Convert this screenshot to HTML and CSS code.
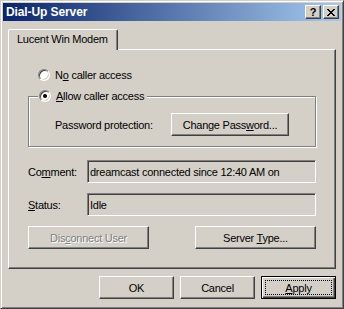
FILE: index.html
```html
<!DOCTYPE html>
<html lang="en">
<head>
    <meta charset="UTF-8">
    <meta name="viewport" content="width=device-width, initial-scale=1.0">
    <title>Dial-Up Server</title>
    <link rel="stylesheet" href="styles.css">
</head>
<body>
    <div class="window">
        <!-- Caption bar -->
        <div class="titlebar">
            <span class="title">Dial-Up Server</span>
            <div class="caption-buttons">
                <button class="cap-btn help">?</button>
                <button class="cap-btn">
                    <svg width="8" height="7" viewBox="0 0 8 7">
                        <path d="M0 0h2v1h-2zM6 0h2v1h-2zM1 1h2v1h-2zM5 1h2v1h-2zM2 2h4v1h-4zM3 3h2v1h-2zM2 4h4v1h-4zM1 5h2v1h-2zM5 5h2v1h-2zM0 6h2v1h-2zM6 6h2v1h-2z" fill="#000"/>
                    </svg>
                </button>
            </div>
        </div>

        <div class="content">
            <!-- Tab strip -->
            <div class="tabs">
                <div class="tab">Lucent Win Modem</div>
            </div>

            <div class="panel">
                <label class="radio first">
                    <span class="radio-box"></span>
                    <span>N<u>o</u> caller access</span>
                </label>

                <fieldset class="group">
                    <legend>
                        <label class="radio">
                            <span class="radio-box checked"></span>
                            <span><u>A</u>llow caller access</span>
                        </label>
                    </legend>
                    <div class="password-row">
                        <span class="password-label">Password protection:</span>
                        <button class="btn change-btn">Change Pass<u>w</u>ord...</button>
                    </div>
                </fieldset>

                <div class="field comment">
                    <span class="field-label">Co<u>m</u>ment:</span>
                    <div class="edit">dreamcast connected since 12:40 AM on</div>
                </div>
                <div class="field">
                    <span class="field-label"><u>S</u>tatus:</span>
                    <div class="edit">Idle</div>
                </div>

                <div class="actions">
                    <button class="btn wide disabled">Dis<u>c</u>onnect User</button>
                    <button class="btn wide">Server <u>T</u>ype...</button>
                </div>
            </div>

            <!-- Dialog buttons -->
            <div class="footer">
                <button class="btn">OK</button>
                <button class="btn">Cancel</button>
                <button class="btn default"><span class="focus"><u>A</u>pply</span></button>
            </div>
        </div>
    </div>
</body>
</html>
```

FILE: styles.css
```css
body {
    margin: 0;
    padding: 0;
    background: #d4d0c8;
    font-family: "Liberation Sans", Arial, sans-serif;
    font-size: 11px;
    letter-spacing: -0.25px;
    color: #000;
}

u {
    text-decoration: underline;
    text-underline-offset: 1px;
}

/* Window frame */
.window {
    box-sizing: border-box;
    width: 344px;
    height: 309px;
    padding: 2px;
    background: #d4d0c8;
    border: 1px solid;
    border-color: #d4d0c8 #404040 #404040 #d4d0c8;
    box-shadow: inset 1px 1px #fff, inset -1px -1px #808080;
}

.titlebar {
    height: 18px;
    display: flex;
    align-items: center;
    justify-content: space-between;
    padding-left: 3px;
    background: linear-gradient(to right, #0a246a, #a6caf0);
}

.title {
    color: #fff;
    font-weight: bold;
    font-size: 12px;
    letter-spacing: -0.1px;
}

.caption-buttons {
    display: flex;
    gap: 2px;
    margin-right: 2px;
}

.cap-btn {
    box-sizing: border-box;
    width: 16px;
    height: 14px;
    padding: 0;
    display: flex;
    align-items: center;
    justify-content: center;
    background: #d4d0c8;
    border: 1px solid;
    border-color: #fff #404040 #404040 #fff;
    box-shadow: inset -1px -1px #808080;
    font-family: "Liberation Sans", Arial, sans-serif;
    font-weight: bold;
    font-size: 11px;
    line-height: 1;
}

.cap-btn svg {
    display: block;
    margin-top: 1px;
}

.content {
    padding: 0 5px;
}

/* Tabs */
.tabs {
    display: flex;
    margin-top: 8px;
    height: 20px;
    position: relative;
    z-index: 1;
}

.tab {
    box-sizing: border-box;
    height: 21px;
    padding: 3px 8px 0 8px;
    width: 110px;
    background: #d4d0c8;
    border: 1px solid;
    border-bottom: none;
    border-color: #fff #404040 #d4d0c8 #fff;
    border-radius: 2px 2px 0 0;
    box-shadow: inset -1px 0 #808080;
    white-space: nowrap;
}

.panel {
    box-sizing: border-box;
    height: 220px;
    padding: 0 19px;
    border: 1px solid;
    border-color: #fff #404040 #404040 #fff;
    box-shadow: inset -1px -1px #808080;
    display: flex;
    flex-direction: column;
}

/* Radio buttons */
.radio {
    display: flex;
    align-items: center;
    gap: 5px;
    height: 14px;
}

.radio.first {
    margin: 18px 0 0 10px;
}

.radio-box {
    box-sizing: border-box;
    width: 12px;
    height: 12px;
    border-radius: 50%;
    background: #fff;
    border: 1px solid;
    border-color: #808080 #fff #fff #808080;
    box-shadow: inset 1px 1px #404040, inset -1px -1px #d4d0c8;
    display: flex;
    align-items: center;
    justify-content: center;
}

.radio-box.checked::after {
    content: "";
    width: 4px;
    height: 4px;
    border-radius: 50%;
    background: #000;
}

/* Group box */
.group {
    margin: 7px 0 0 0;
    padding: 10px 0 10px 9px;
    border: 1px solid #808080;
    box-shadow: inset 1px 1px #fff, 1px 1px #fff;
    min-width: 0;
}

.group legend {
    padding: 0 3px 0 1px;
    background: #d4d0c8;
}

.password-row {
    display: flex;
    align-items: center;
    padding-left: 17px;
}

.password-label {
    width: 116px;
}

/* Push buttons */
.btn {
    box-sizing: border-box;
    width: 75px;
    height: 23px;
    padding: 0;
    background: #d4d0c8;
    border: 1px solid;
    border-color: #fff #404040 #404040 #fff;
    box-shadow: inset -1px -1px #808080;
    font-family: "Liberation Sans", Arial, sans-serif;
    font-size: 11px;
    letter-spacing: -0.25px;
    color: #000;
    white-space: nowrap;
}

.change-btn {
    width: 118px;
}

.btn.wide {
    width: 121px;
}

.btn.disabled {
    color: #808080;
    text-shadow: 1px 1px #fff;
}

.btn.default {
    border: 1px solid #000;
    box-shadow: inset 1px 1px #fff, inset -1px -1px #404040, inset -2px -2px #808080;
    padding: 3px;
}

.focus {
    display: flex;
    align-items: center;
    justify-content: center;
    height: 100%;
    outline: 1px dotted #000;
    outline-offset: -1px;
}

/* Read-only fields */
.field {
    display: flex;
    align-items: center;
    margin-top: 10px;
}

.field.comment {
    margin-top: 13px;
}

.field-label {
    width: 59px;
}

.edit {
    flex: 1;
    box-sizing: border-box;
    height: 23px;
    padding-left: 2px;
    display: flex;
    align-items: center;
    border: 1px solid;
    border-color: #808080 #fff #fff #808080;
    box-shadow: inset 1px 1px #404040, inset -1px -1px #d4d0c8;
    white-space: nowrap;
    overflow: hidden;
}

.actions {
    display: flex;
    justify-content: space-between;
    margin-top: 10px;
}

.footer {
    display: flex;
    justify-content: flex-end;
    gap: 6px;
    margin-top: 7px;
}
```
